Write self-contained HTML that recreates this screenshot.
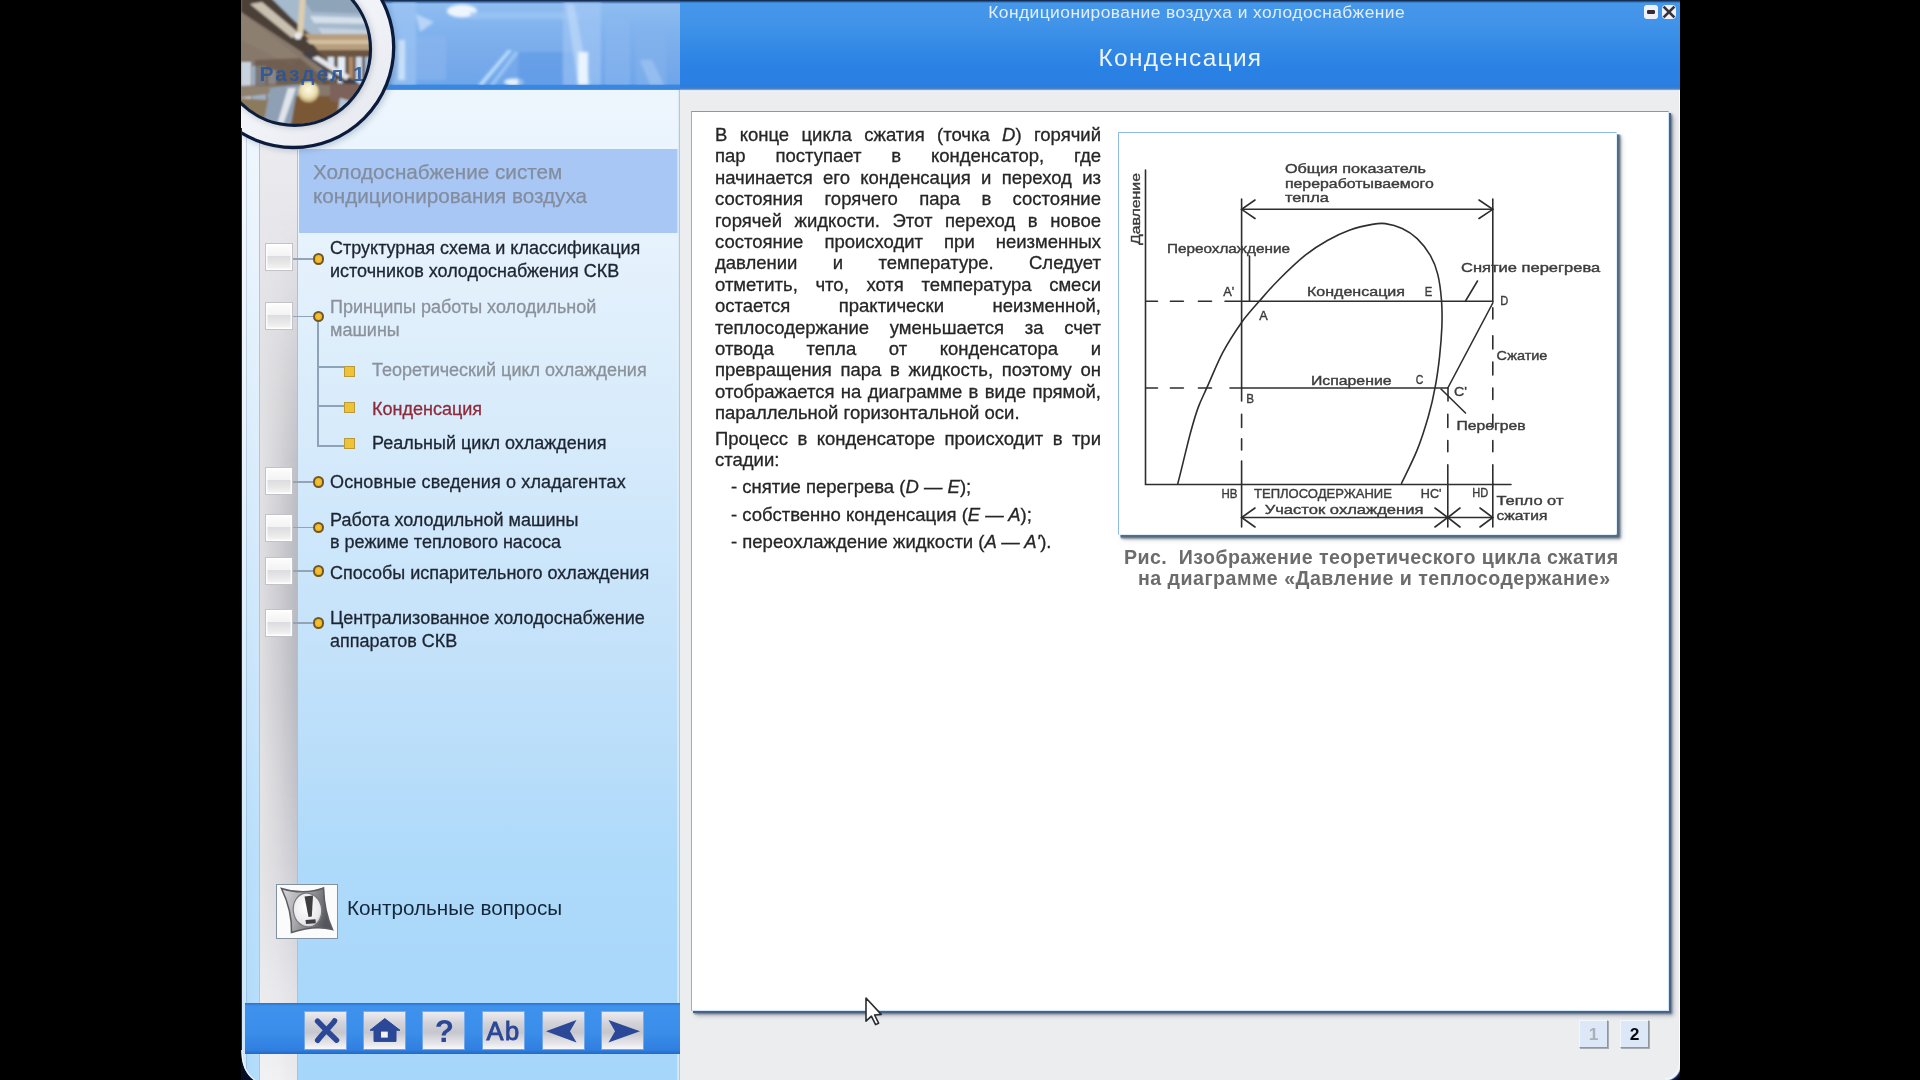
<!DOCTYPE html>
<html><head><meta charset="utf-8">
<title>Конденсация</title>
<style>
html,body{margin:0;padding:0;background:#000;}
body{width:1920px;height:1080px;overflow:hidden;position:relative;font-family:"Liberation Sans",sans-serif;}
.abs{position:absolute;}
#app{position:absolute;left:241px;top:0;width:1439px;height:1080px;background:#ecedef;overflow:hidden;}
#blurwrap{position:absolute;left:0;top:0;width:1920px;height:1080px;background:#000;filter:blur(.45px);}
/* right header */
#hdr{position:absolute;left:439px;top:0;width:1000px;height:90px;background:linear-gradient(#0a1a33 0px,#1c3f73 1px,#4497e9 3px,#4194e8 22px,#3288e5 50px,#2a81e4 70px,#2a7fe2 84px,#2f7cd6 87px,#4c84c8 89px,#9cc0e8 90px);}
#hdr .t1{position:absolute;left:308.2px;top:2.2px;color:#e2eefc;font-size:17.4px;line-height:20px;letter-spacing:.45px;white-space:nowrap;}
#hdr .t2{position:absolute;left:418.5px;top:44px;color:#eef5fe;font-size:24.4px;line-height:28px;letter-spacing:1.35px;white-space:nowrap;}
/* sidebar */
#side{position:absolute;left:0;top:0;width:439px;height:1080px;background:linear-gradient(#eef6fd 90px,#e6f2fc 240px,#d3e9fb 480px,#bfe0fa 700px,#aedafa 860px,#a6d6fa 1080px);}
#banner{position:absolute;left:0;top:0;width:439px;height:90px;background:linear-gradient(#0a1a33 0px,#3f6fae 2px,#8fbdf0 4px,#80b2ee 30px,#78aaea 60px,#6ea6ea 84px,#3a88e2 85px,#3a86de 89px,#6aa0dc 90px);}
#strip0{position:absolute;left:0;top:90px;width:19px;height:990px;background:linear-gradient(90deg,rgba(255,255,255,.05),rgba(255,255,255,.18));}
#strip{position:absolute;left:18.4px;top:140px;width:39px;height:940px;background:linear-gradient(#ececf0 0px,#e6e6ea 100px,#d6d6da 260px,#c8c8cd 430px,#cbcbd0 560px,#d8d8dc 720px,#e8e8ec 850px,#f1f1f3 940px);border-left:1.3px solid #b9c2ce;border-right:1.3px solid #b4bfcd;box-sizing:border-box;}
#sidehead{position:absolute;left:57.5px;top:149px;width:381.5px;height:83.5px;background:#a8c7f4;}
#sidehead div{position:absolute;left:14.5px;top:10.5px;font-size:20.7px;line-height:24px;color:#838d9f;-webkit-text-stroke:.25px #838d9f;white-space:nowrap;}
#sideedge{position:absolute;left:436px;top:90px;width:3px;height:990px;background:linear-gradient(90deg,rgba(255,255,255,.35),#d8e8f5 60%,#9fb3c4);}
.it{position:absolute;left:89px;font-size:18px;line-height:22.5px;color:#1e2532;-webkit-text-stroke:.3px currentColor;white-space:nowrap;}
.it.g{color:#8b919b;}
.sub{left:131px;}
.cb{position:absolute;left:24px;width:28px;height:28px;background:linear-gradient(#fdfdfd 0%,#f3f3f4 46%,#dddde0 48%,#e6e6e8 70%,#f6f6f7 100%);border:1px solid #c2c3c8;box-sizing:border-box;box-shadow:inset 0 0 0 1.5px rgba(255,255,255,.85);}
.ln{position:absolute;left:52px;width:20px;height:1.5px;background:#95a4b4;}
.dot{position:absolute;left:71.5px;width:7.5px;height:7.5px;border-radius:50%;background:radial-gradient(#f7c23a,#eeae22);border:2px solid #6f5822;}
.sq{position:absolute;left:102.5px;width:11px;height:11px;background:#f0c236;border:1px solid #b89a3c;box-sizing:border-box;}
.vl{position:absolute;background:#8ea2b8;}
/* toolbar */
#tb{position:absolute;left:4px;top:1003px;width:435px;height:51px;background:linear-gradient(#2a6fcf 0px,#3f92ec 3px,#3a8de9 30px,#2f7fe0 47px,#2668c4 51px);}
.tbb{position:absolute;top:9px;width:41px;height:37px;background:linear-gradient(#ececf0 0%,#d2d2d9 30%,#c6c6ce 55%,#e2e2e7 82%,#f8f8fa 100%);box-shadow:0 0 0 1px rgba(170,195,235,.55);}
/* content */
#panel{position:absolute;left:450px;top:111px;width:978px;height:900px;background:#fff;border:1px solid #86b4dc;border-top-color:#7a9cc0;border-right-color:#cfe4f6;border-bottom-color:#cfe4f6;box-sizing:border-box;box-shadow:2px 2px 0 0 #4b617e,3px 3px 2px 0 rgba(62,76,100,.75),5px 5px 4px 0 rgba(80,95,120,.35);}
#txt{position:absolute;left:474px;top:124px;width:386px;font-size:18.5px;line-height:21.4px;color:#262626;-webkit-text-stroke:.3px #262626;text-align:justify;}
.jl{text-align:justify;text-align-last:justify;white-space:nowrap;height:21.4px;}
.ll{white-space:nowrap;height:21.4px;}
.li{padding-left:16px;height:27.5px;white-space:nowrap;}
#fig{position:absolute;left:877px;top:132px;width:499px;height:403px;background:#fff;border:1px solid #8dbbe6;border-right-color:#dff0fb;border-bottom-color:#dff0fb;box-sizing:border-box;border-radius:0 0 2px 0;box-shadow:2.5px 2.5px 0 0 #586a80,3.5px 3.5px 2px 0 rgba(80,95,115,.6),5px 5px 4px 0 rgba(90,105,125,.3);}
#cap{position:absolute;left:0;top:547px;font-weight:bold;font-size:19.6px;line-height:20.5px;color:#6c6c6c;}
#cap div{position:absolute;top:0;white-space:pre;}
.pg{position:absolute;top:1020px;width:29px;height:28px;background:#dce8f7;border:1px solid;border-color:#f4f8fd #8f969e #8f969e #f4f8fd;box-sizing:border-box;font-weight:bold;font-size:17.4px;line-height:27px;text-align:center;box-shadow:1px 1px 0 #a9adb3;}
</style></head>
<body>
<div id="blurwrap">
<div id="app">
  <div id="hdr">
    <div class="t1">Кондиционирование воздуха и холодоснабжение</div>
    <div class="t2">Конденсация</div>
    <!-- window buttons -->
    <div class="abs" style="left:964px;top:5px;width:14px;height:14px;border-radius:3px;background:#eef2f8;"></div>
    <div class="abs" style="left:967.3px;top:10.2px;width:7.8px;height:3.6px;background:#3a2a32;border-radius:1.2px;"></div>
    <div class="abs" style="left:982px;top:5px;width:14px;height:14px;border-radius:4px;background:#eef2f8;"></div>
    <svg class="abs" style="left:982px;top:5px" width="14" height="14"><path d="M1.6 1.6L12.4 12.4M12.4 1.6L1.6 12.4" stroke="#3a3238" stroke-width="2.7"/></svg>
  </div>
  <div class="abs" style="left:439px;top:90px;width:1000px;height:2.2px;background:linear-gradient(#d6e6f8,#f1f4f9);"></div>
  <div id="side">
    <div id="banner"><svg class="abs" style="left:0;top:2px" width="439" height="83" viewBox="241 2 439 83">
<defs><filter id="bb" x="-10%" y="-20%" width="120%" height="140%"><feGaussianBlur stdDeviation="1.6"/></filter></defs>
<g filter="url(#bb)">
<rect x="392" y="2" width="24" height="83" fill="#9cc4f3" opacity=".7"/>
<rect x="398" y="40" width="7" height="40" fill="#d6e8fb" opacity=".8"/>
<polygon points="416,14 434,22 420,32" fill="#c5dcf8" opacity=".8"/>
<rect x="416" y="36" width="30" height="44" fill="#8ab6ef" opacity=".6"/>
<ellipse cx="462" cy="11" rx="15" ry="6.5" fill="#eef5fd"/>
<rect x="470" y="12" width="110" height="7" fill="#9cc6f4" opacity=".7"/>
<polygon points="478,85 483,85 512,50 508,50" fill="#bfe0fa"/>
<polygon points="490,85 494,85 519,52 515,52" fill="#a9d2f7" opacity=".8"/>
<ellipse cx="514" cy="82" rx="10" ry="3.5" fill="#e6f2fd"/>
<rect x="518" y="52" width="58" height="33" fill="#5a98e6" opacity=".55"/>
<rect x="563" y="2" width="38" height="83" fill="#a7cbf5" opacity=".55"/>
<polygon points="566,4 574,4 590,85 578,85" fill="#c3dcf8" opacity=".6"/>
<rect x="578" y="52" width="10" height="33" fill="#e9f4fe"/>
<rect x="605" y="20" width="25" height="65" fill="#8dbaf0" opacity=".5"/>
<rect x="636" y="30" width="30" height="55" fill="#86b4ee" opacity=".5"/>
<polygon points="640,60 652,60 664,85 650,85" fill="#a6c8f3" opacity=".6"/>
</g></svg></div>
    <div id="strip0"><div style="position:absolute;left:0;top:0;width:4.5px;height:100%;background:rgba(255,255,255,.4)"></div><div style="position:absolute;left:4.5px;top:0;width:1px;height:100%;background:rgba(130,150,180,.35)"></div></div>
    <div id="strip"><div style="position:absolute;left:0;top:0;right:0;bottom:0;background:linear-gradient(90deg,rgba(255,255,255,.42),rgba(255,255,255,.12) 45%,rgba(80,80,110,.13));-webkit-mask-image:linear-gradient(rgba(0,0,0,0) 60px,#000 330px,#000 640px,rgba(0,0,0,.3) 900px);"></div></div>
    <div id="sidehead"><div>Холодоснабжение систем<br>кондиционирования воздуха</div></div>
    <div id="sideedge"></div>
<svg class="abs" style="left:0;top:0" width="439" height="160" viewBox="241 0 439 160">
<defs>
<clipPath id="pc"><circle cx="294.5" cy="49.3" r="75"/></clipPath>
<filter id="pb" x="-10%" y="-10%" width="120%" height="120%"><feGaussianBlur stdDeviation="1.3"/></filter>
<filter id="sh" x="-20%" y="-20%" width="140%" height="140%"><feGaussianBlur stdDeviation="3"/></filter>
<radialGradient id="lamp" cx=".5" cy=".4" r=".6"><stop offset="0" stop-color="#fffbe6"/><stop offset=".6" stop-color="#ece0b4"/><stop offset="1" stop-color="#b79a62"/></radialGradient>
<linearGradient id="ring" x1="0" y1="0" x2="1" y2="1"><stop offset="0" stop-color="#ffffff"/><stop offset=".6" stop-color="#f1f3f8"/><stop offset="1" stop-color="#e4e6ee"/></linearGradient>
</defs>
<circle cx="296" cy="50" r="101" fill="#5d7896" opacity=".35" filter="url(#sh)"/>
<circle cx="293.5" cy="47.3" r="100.2" fill="url(#ring)" stroke="#0b1b3b" stroke-width="3.3"/>
<circle cx="295.5" cy="50" r="78" fill="#6b7486" opacity=".35" filter="url(#sh)"/>
<g clip-path="url(#pc)"><g filter="url(#pb)">
<rect x="215" y="-30" width="170" height="170" fill="#86786a"/>
<!-- glass roof -->
<polygon points="262,-5 372,-5 372,40 318,40" fill="#a6bace"/>
<polygon points="300,-5 372,-5 372,14 312,12" fill="#8ea4b8"/>
<polygon points="310,16 372,18 372,24 314,23" fill="#d3dfe9"/>
<polygon points="318,28 372,30 372,34 322,34" fill="#c4d2df"/>
<!-- dark diagonal beam top-left -->
<polygon points="241,-5 268,-5 336,62 326,68 241,12" fill="#4c4038"/>
<polygon points="241,12 300,58 292,66 241,40" fill="#8d7f70"/>
<polygon points="250,4 262,2 300,34 292,38" fill="#c9c0b0"/>
<!-- cream post -->
<polygon points="300,-5 306,-5 303,36 297,36" fill="#dccdae"/>
<circle cx="298" cy="36" r="3.5" fill="#e8e8ec"/>
<!-- tan beam -->
<polygon points="304,34 375,34 375,50 318,50" fill="#b79f7e"/>
<polygon points="306,40 375,40 375,44 310,44" fill="#d2c0a0"/>
<polygon points="316,50 375,50 375,57 324,57" fill="#6b5443"/>
<!-- windows -->
<rect x="322" y="57" width="52" height="28" fill="#6a5c55"/>
<rect x="328" y="57" width="6" height="22" fill="#d9e4ee"/><rect x="338" y="57" width="7" height="26" fill="#e4edf5"/>
<rect x="349" y="57" width="4" height="28" fill="#b48a62"/><rect x="356" y="57" width="6" height="28" fill="#cfdcea"/><rect x="365" y="57" width="5" height="28" fill="#a9bdd3"/>
<!-- stair diagonal -->
<polygon points="302,54 310,52 372,92 368,100" fill="#3f4048"/>
<polygon points="312,58 318,56 350,76 346,80" fill="#e6e6ea"/>
<!-- left pillars -->
<rect x="241" y="62" width="10" height="40" fill="#c9d3df"/><rect x="252" y="66" width="14" height="36" fill="#9fb2c8"/><rect x="268" y="70" width="8" height="30" fill="#c2cfdd"/>
<polygon points="238,86 280,84 282,92 238,98" fill="#8f8170"/>
<!-- lower -->
<polygon points="270,88 300,84 296,128 262,128" fill="#8fa0b4"/>
<polygon points="288,88 296,88 282,128 276,128" fill="#dfe4ea"/>
<polygon points="296,96 345,96 340,130 290,130" fill="#7a5836"/>
<polygon points="330,84 372,84 360,112 330,100" fill="#7b6258"/>
<polygon points="340,98 362,104 348,124 336,124" fill="#b5c4d4"/>
<polygon points="238,98 268,100 262,130 238,130" fill="#8c7a5c"/>
<polygon points="255,60 300,58 330,84 255,86" fill="#5e4a3c" opacity=".55"/>
<!-- lamp -->
<circle cx="308.5" cy="92" r="10.5" fill="url(#lamp)"/>
</g>
<text x="259.5" y="80.5" font-family="Liberation Sans, sans-serif" font-size="21" font-weight="bold" fill="#27569a" opacity=".88" letter-spacing="1.9" filter="url(#pb)" style="filter:blur(.6px)">Раздел  1</text>
</g>
<circle cx="294.5" cy="49.3" r="76" fill="none" stroke="#0d1d3c" stroke-width="3.2"/>
</svg>

    <!-- tree -->
    <div class="cb" style="top:243.3px"></div><div class="ln" style="top:258.2px"></div><div class="dot" style="top:253.25px"></div>
    <div class="it" style="top:237.3px">Структурная схема и классификация<br>источников холодоснабжения СКВ</div>
    <div class="cb" style="top:301.5px"></div><div class="ln" style="top:315.7px"></div><div class="dot" style="top:310.75px"></div>
    <div class="it g" style="top:296.3px">Принципы работы холодильной<br>машины</div>
    <div class="vl" style="left:76px;top:322px;width:1.5px;height:124px"></div>
    <div class="vl" style="left:76px;top:366px;width:27px;height:1.5px"></div>
    <div class="vl" style="left:76px;top:405px;width:27px;height:1.5px"></div>
    <div class="vl" style="left:76px;top:445px;width:27px;height:1.5px"></div>
    <div class="sq" style="top:365.5px"></div><div class="sq" style="top:402px"></div><div class="sq" style="top:438px"></div>
    <div class="it g sub" style="top:358.8px">Теоретический цикл охлаждения</div>
    <div class="it sub" style="top:397.8px;color:#8e2b3b">Конденсация</div>
    <div class="it sub" style="top:431.8px">Реальный цикл охлаждения</div>
    <div class="cb" style="top:466.8px"></div><div class="ln" style="top:481.2px"></div><div class="dot" style="top:476.25px"></div>
    <div class="it" style="top:470.8px;letter-spacing:.13px">Основные сведения о хладагентах</div>
    <div class="cb" style="top:513.5px"></div><div class="ln" style="top:526.8px"></div><div class="dot" style="top:521.85px"></div>
    <div class="it" style="top:508.8px">Работа холодильной машины<br>в режиме теплового насоса</div>
    <div class="cb" style="top:557.3px"></div><div class="ln" style="top:570.2px"></div><div class="dot" style="top:565.25px"></div>
    <div class="it" style="top:562.3px">Способы испарительного охлаждения</div>
    <div class="cb" style="top:608.7px"></div><div class="ln" style="top:622.0px"></div><div class="dot" style="top:617.05px"></div>
    <div class="it" style="top:607.3px">Централизованное холодоснабжение<br>аппаратов СКВ</div>
    <!-- control questions -->
    <div class="abs" id="kq" style="left:35px;top:884px;width:61.5px;height:55px;background:#fbfbfc;border:1.5px solid #8392a2;box-sizing:border-box;"><svg width="59" height="52" viewBox="0 0 59 52" style="position:absolute;left:0;top:0;filter:blur(.5px)">
<defs><linearGradient id="kg" x1="0" y1="0" x2="1" y2="0.3"><stop offset="0" stop-color="#d9d9dc"/><stop offset=".45" stop-color="#a9a9ad"/><stop offset="1" stop-color="#55565b"/></linearGradient>
<radialGradient id="ke" cx=".45" cy=".4" r=".7"><stop offset="0" stop-color="#ffffff"/><stop offset=".7" stop-color="#e9e9ec"/><stop offset="1" stop-color="#b5b5ba"/></radialGradient></defs>
<path d="M4.5 3.5C18 8 34 8 46.5 3C47 18 50 33 55.5 44.5C42 41 28 43 14.5 47.5C15 32 11 17 4.5 3.5Z" fill="url(#kg)" stroke="#5c5d62" stroke-width="1.6"/>
<ellipse cx="30.5" cy="25" rx="14.2" ry="17" fill="url(#ke)" stroke="#77787d" stroke-width="1.2" transform="rotate(-8 30.5 25)"/>
<path d="M27.5 11.5L36 10.5L34.8 31.5L31.5 32Z" fill="#3d3d42"/>
<path d="M28.5 35L38.5 34.2L38.8 38.2L29 39Z" fill="#3d3d42"/>
</svg></div>
    <div class="abs" style="left:106px;top:896px;font-size:20.7px;line-height:24px;color:#15263a;white-space:nowrap;">Контрольные вопросы</div>
    <!-- toolbar -->
    <div id="tb">
      <div class="tbb" style="left:60px"><svg width="41" height="37" style="position:absolute;left:0;top:0;filter:blur(.35px)"><path d="M12.5 9.2C17 14 26 23 31.6 28.2M29.6 8.8C27 13 17 22 12.6 28.4" stroke="#2b4797" stroke-width="5.4" stroke-linecap="round" fill="none"/></svg></div><div class="tbb" style="left:119px"><svg width="41" height="37" style="position:absolute;left:0;top:0;filter:blur(.35px)"><path d="M20.8 6.6L36 18.3H32V29.4H10V18.3H6Z" fill="#2b4797" stroke="#2b4797" stroke-width="1" stroke-linejoin="round"/><rect x="17" y="19.6" width="6.8" height="6" fill="#f1f1f6"/></svg></div><div class="tbb" style="left:178px"><svg width="41" height="37" style="position:absolute;left:0;top:0;filter:blur(.35px)"><text x="21.3" y="30.4" text-anchor="middle" font-family="Liberation Sans, sans-serif" font-weight="bold" font-size="31.5" fill="#2b4797">?</text></svg></div>
      <div class="tbb" style="left:238px"><svg width="41" height="37" style="position:absolute;left:0;top:0;filter:blur(.35px)"><text x="20.6" y="28.4" text-anchor="middle" font-family="Liberation Sans, sans-serif" font-size="25.5" fill="#2b4797" stroke="#2b4797" stroke-width=".9" letter-spacing="1.4">Ab</text></svg></div><div class="tbb" style="left:297.5px"><svg width="41" height="37" style="position:absolute;left:0;top:0;filter:blur(.35px)"><path d="M3 19.2L33.5 8L27 19.2L33.5 30.5Z" fill="#2b4797"/></svg></div><div class="tbb" style="left:356.5px"><svg width="41" height="37" style="position:absolute;left:0;top:0;filter:blur(.35px)"><path d="M38 19.2L6.5 8L13 19.2L6.5 30.5Z" fill="#2b4797"/></svg></div>
    </div>
  </div>
  <div class="abs" style="right:0;top:90px;width:1.2px;height:990px;background:#fbfcfe;"></div>
  <div class="abs" style="right:0;bottom:0;width:15px;height:15px;background:radial-gradient(circle at 0 0,rgba(255,255,255,0) 12.5px,#f4f7fd 13.5px,#e8eefb 15px,#16244a 16.5px,#0a1230 18px,#000 21px);"></div>
  <div class="abs" style="left:0;top:128px;width:1.1px;height:952px;background:#1a2a4c;"></div>
  <svg class="abs" style="left:0;bottom:0" width="16" height="30" viewBox="0 0 16 30"><path d="M0 0C0.5 14 4 24 13 30H0Z" fill="#060c22"/><path d="M0.6 0C1.2 14 4.6 24 13.8 30" fill="none" stroke="#f4f8fd" stroke-width="1.4" opacity=".8"/></svg>
  <div id="panel"></div>
  <div id="txt">
    <div class="jl">В конце цикла сжатия (точка <i>D</i>) горячий</div>
    <div class="jl">пар поступает в конденсатор, где</div>
    <div class="jl">начинается его конденсация и переход из</div>
    <div class="jl">состояния горячего пара в состояние</div>
    <div class="jl">горячей жидкости. Этот переход в новое</div>
    <div class="jl">состояние происходит при неизменных</div>
    <div class="jl">давлении и температуре. Следует</div>
    <div class="jl">отметить, что, хотя температура смеси</div>
    <div class="jl">остается практически неизменной,</div>
    <div class="jl">теплосодержание уменьшается за счет</div>
    <div class="jl">отвода тепла от конденсатора и</div>
    <div class="jl">превращения пара в жидкость, поэтому он</div>
    <div class="jl">отображается на диаграмме в виде прямой,</div>
    <div class="ll">параллельной горизонтальной оси.</div>
    <div class="jl" style="margin-top:4.6px">Процесс в конденсаторе происходит в три</div>
    <div class="ll">стадии:</div>
    <div class="li" style="margin-top:5.6px">- снятие перегрева (<i>D — E</i>);</div>
    <div class="li">- собственно конденсация (<i>E — A</i>);</div>
    <div class="li">- переохлаждение жидкости (<i>A — A'</i>).</div>
  </div>
  <div id="fig"><svg width="497" height="401" viewBox="1119 133 497 401" style="position:absolute;left:0;top:0" font-family="Liberation Sans, sans-serif" font-size="12.6" fill="#3c3c3c" stroke="#3c3c3c" stroke-width=".38">
<g stroke="#2e2e2e" stroke-width="1.6" fill="none" stroke-linecap="round">
<path d="M1145.5 170V484.5H1511"/>
<path d="M1241.6 199V401"/><path d="M1241.6 414.3V427.4M1241.6 438.7V450M1241.6 461V484"/><path d="M1241.6 484V527"/>
<path d="M1492.8 199V302"/><path d="M1492.8 307.8V319M1492.8 335.8V349M1492.8 362V375M1492.8 388V399.4M1492.8 414.3V427.4M1492.8 440.5V451.7M1492.8 464.8V484"/><path d="M1492.8 484V527"/>
<path d="M1447.8 414.3V427.4M1447.8 440.5V451.7M1447.8 464.8V527"/>
<path d="M1241.6 209.3H1492.8"/><path d="M1255 200L1241.6 209.3L1255 218.5M1479 200L1492.8 209.3L1479 218.5"/>
<path d="M1146 301.3H1157.5M1170.4 301.3H1183.4M1198.4 301.3H1211.5"/><path d="M1225 301.3H1492.8"/>
<path d="M1146 388H1157.5M1170.4 388H1183.4M1198.4 388H1211.5"/><path d="M1230 388H1447.8"/>
<path d="M1447.8 388L1492.8 303"/>
<path d="M1249.5 256V301"/><path d="M1477.5 281L1465.5 301"/><path d="M1441 389L1465.5 413"/><path d="M1448 388V401"/>
<path d="M1177.8 483.5C1178.8 479.8 1181.3 469.8 1183.4 461.1C1185.6 452.4 1188.4 440.2 1190.9 431.2C1193.4 422.1 1195.7 414.2 1198.4 406.9C1201.1 399.6 1203.0 396.5 1207.0 387.4C1211.1 378.4 1217.0 363.4 1222.7 352.6C1228.4 341.9 1235.2 331.5 1241.4 322.7C1247.6 314.0 1253.9 307.5 1260.1 300.3C1266.3 293.1 1271.3 287.2 1278.8 279.7C1286.3 272.2 1296.9 262.0 1305.0 255.4C1313.1 248.9 1319.9 244.7 1327.4 240.5C1334.9 236.2 1342.4 232.7 1349.9 230.0C1357.3 227.3 1366.4 225.4 1372.3 224.4C1378.2 223.3 1380.4 222.9 1385.4 223.6C1390.4 224.3 1396.9 226.0 1402.2 228.5C1407.5 231.0 1412.5 234.1 1417.2 238.6C1421.9 243.1 1426.8 249.5 1430.3 255.4C1433.7 261.3 1435.9 266.6 1437.7 274.1C1439.6 281.6 1440.8 291.6 1441.5 300.3C1442.2 309.0 1442.2 317.1 1441.9 326.5C1441.5 335.8 1440.7 346.2 1439.6 356.4C1438.5 366.5 1437.0 377.5 1435.1 387.4C1433.3 397.4 1431.4 405.8 1428.4 416.2C1425.4 426.6 1421.7 438.7 1417.2 449.9C1412.7 461.1 1404.1 477.9 1401.5 483.5"/>
<path d="M1241.6 517.5H1492.8"/>
<path d="M1255 508L1241.6 517.5L1255 527M1435 508L1447.8 517.5L1435 527M1460 508L1447.8 517.5L1460 527M1480 508L1492.8 517.5L1480 527"/>
</g>
<text transform="translate(1139.7,245) rotate(-90) scale(1.258,1)">Давление</text>
<text transform="translate(1284.9,172.9) scale(1.284,1)">Общия показатель</text>
<text transform="translate(1284.9,188) scale(1.261,1)">переработываемого</text>
<text transform="translate(1284.9,202.2) scale(1.302,1)">тепла</text>
<text transform="translate(1167,253) scale(1.214,1)">Переохлаждение</text>
<text transform="translate(1461,272) scale(1.311,1)">Снятие перегрева</text>
<text transform="translate(1223.3,296) scale(1.018,1)">A'</text>
<text transform="translate(1307,296) scale(1.274,1)">Конденсация</text>
<text transform="translate(1424.8,296) scale(0.894,1)">E</text>
<text transform="translate(1500.3,305) scale(0.879,1)">D</text>
<text transform="translate(1259.2,320) scale(1.012,1)">A</text>
<text transform="translate(1496.4,360) scale(1.151,1)">Сжатие</text>
<text transform="translate(1310.9,385) scale(1.257,1)">Испарение</text>
<text transform="translate(1415.7,384.4) scale(0.836,1)">C</text>
<text transform="translate(1454,396.4) scale(1.129,1)">C'</text>
<text transform="translate(1246.2,402.5) scale(0.927,1)">B</text>
<text transform="translate(1456.5,430.3) scale(1.248,1)">Перегрев</text>
<text transform="translate(1221.5,497.8) scale(0.914,1)">HB</text>
<text transform="translate(1254,497.8) scale(1.035,1)">ТЕПЛОСОДЕРЖАНИЕ</text>
<text transform="translate(1420.8,497.8) scale(1.001,1)">HC'</text>
<text transform="translate(1472.2,497.2) scale(0.879,1)">HD</text>
<text transform="translate(1264.7,513.5) scale(1.316,1)">Участок охлаждения</text>
<text transform="translate(1496.4,504.5) scale(1.307,1)">Тепло от</text>
<text transform="translate(1496.4,519.6) scale(1.238,1)">сжатия</text>
</svg>
</div>
  <div id="cap"><div style="left:883px;letter-spacing:.42px">Рис.  Изображение теоретического цикла сжатия</div><div style="left:897px;letter-spacing:.48px;top:20.5px">на диаграмме «Давление и теплосодержание»</div></div>
  <div class="pg" style="left:1338px;color:#a9b0bb">1</div><div class="pg" style="left:1379px;color:#0a0a12">2</div>
</div>
<svg class="abs" style="left:860px;top:992px;filter:blur(.3px)" width="30" height="40" viewBox="-6 -6 30 40"><path d="M0 0L0 23.2L5.4 18.2L9.6 26.6L12.6 25.2L8.6 17L15.2 16.4Z" fill="#fff" stroke="#2a2c30" stroke-width="1.6" stroke-linejoin="round"/></svg>
</div>
</body></html>
